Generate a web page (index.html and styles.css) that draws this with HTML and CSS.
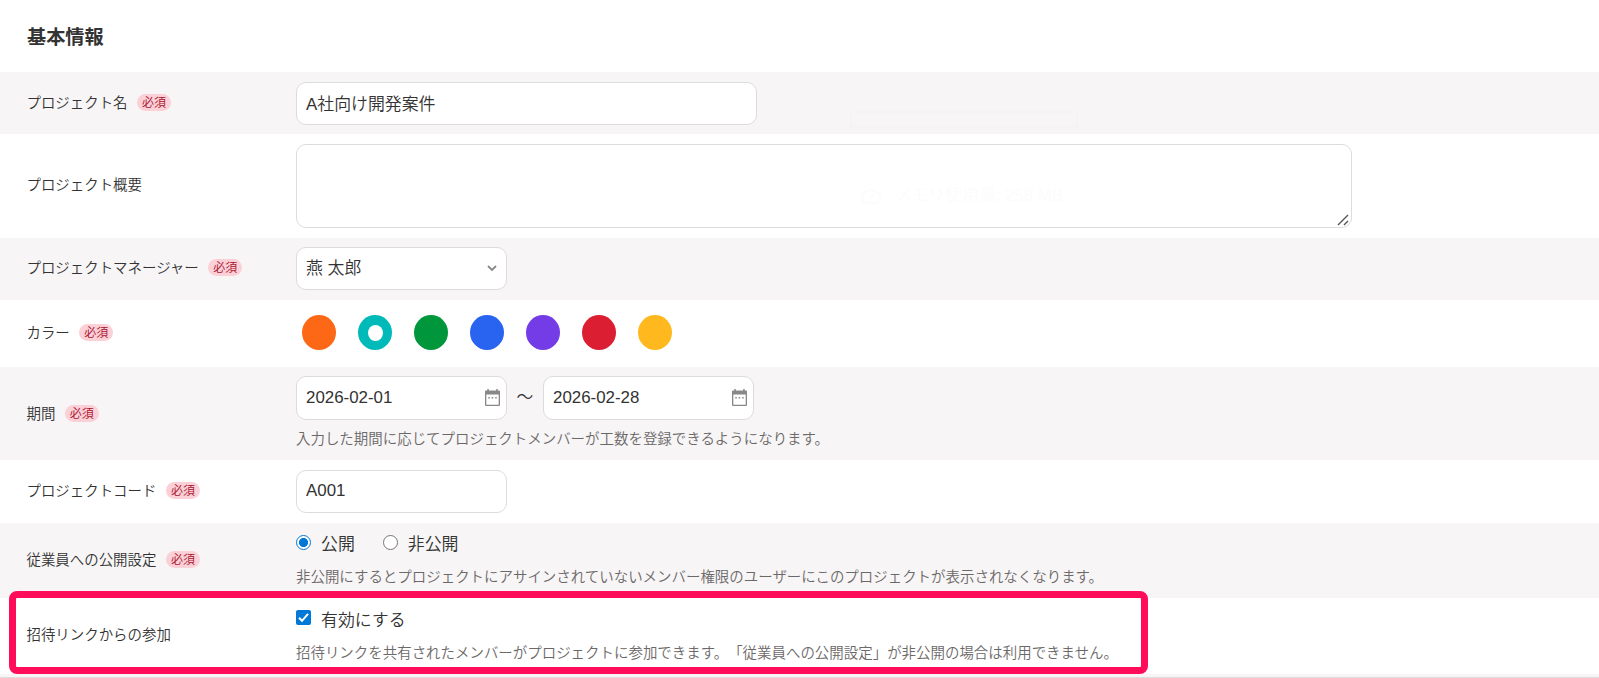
FILE: index.html
```html
<!DOCTYPE html>
<html lang="ja">
<head>
    <meta charset="UTF-8">
    <meta name="viewport" content="width=device-width, initial-scale=1.0">
    <title>基本情報</title>
    <link rel="stylesheet" href="styles.css">
</head>
<body>

    <form class="project-form">
        <h2>基本情報</h2>

        <div class="row row-name">
            <div class="label">プロジェクト名<span class="badge">必須</span></div>
            <div class="field">
                <input type="text" class="control wide" value="A社向け開発案件">
            </div>
        </div>

        <div class="row row-text">
            <div class="label">プロジェクト概要</div>
            <div class="field">
                <div class="textarea-wrap">
                    <textarea class="control"></textarea>
                    <svg class="grip" width="12" height="12" viewBox="0 0 12 12"><path d="M1 11L11 1M7 11L11 7"/></svg>
                </div>
            </div>
        </div>

        <div class="row row-select">
            <div class="label">プロジェクトマネージャー<span class="badge">必須</span></div>
            <div class="field">
                <div class="control box">
                    <span>燕 太郎</span>
                    <svg class="chevron" width="10" height="7" viewBox="0 0 10 7"><path d="M1 1L5 5L9 1"/></svg>
                </div>
            </div>
        </div>

        <div class="row row-color">
            <div class="label">カラー<span class="badge">必須</span></div>
            <div class="field colors">
                <span class="color orange"></span>
                <span class="color teal selected"></span>
                <span class="color green"></span>
                <span class="color blue"></span>
                <span class="color purple"></span>
                <span class="color red"></span>
                <span class="color yellow"></span>
            </div>
        </div>

        <div class="row row-period">
            <div class="label">期間<span class="badge">必須</span></div>
            <div class="field">
                <div class="period">
                    <div class="control box">
                        <span>2026-02-01</span>
                        <svg class="calendar" width="15" height="17" viewBox="0 0 15 17"><path d="M2.3 0h1.5v1.5h7.4V0h1.5v1.5H14a1 1 0 0 1 1 1V16a1 1 0 0 1-1 1H1a1 1 0 0 1-1-1V2.5a1 1 0 0 1 1-1h1.3zM1.3 5.5v10.2h12.4V5.5z" fill-rule="evenodd"/><path d="M3.3 8h1.5v1.5H3.3zM6.7 8h1.5v1.5H6.7zM10.2 8h1.5v1.5h-1.5z"/></svg>
                    </div>
                    <span class="tilde">～</span>
                    <div class="control box">
                        <span>2026-02-28</span>
                        <svg class="calendar" width="15" height="17" viewBox="0 0 15 17"><path d="M2.3 0h1.5v1.5h7.4V0h1.5v1.5H14a1 1 0 0 1 1 1V16a1 1 0 0 1-1 1H1a1 1 0 0 1-1-1V2.5a1 1 0 0 1 1-1h1.3zM1.3 5.5v10.2h12.4V5.5z" fill-rule="evenodd"/><path d="M3.3 8h1.5v1.5H3.3zM6.7 8h1.5v1.5H6.7zM10.2 8h1.5v1.5h-1.5z"/></svg>
                    </div>
                </div>
                <p class="help">入力した期間に応じてプロジェクトメンバーが工数を登録できるようになります。</p>
            </div>
        </div>

        <div class="row row-code">
            <div class="label">プロジェクトコード<span class="badge">必須</span></div>
            <div class="field">
                <input type="text" class="control" value="A001">
            </div>
        </div>

        <div class="row row-public">
            <div class="label">従業員への公開設定<span class="badge">必須</span></div>
            <div class="field">
                <div class="choices">
                    <label class="choice"><input type="radio" name="visibility" checked><span>公開</span></label>
                    <label class="choice"><input type="radio" name="visibility"><span>非公開</span></label>
                </div>
                <p class="help">非公開にするとプロジェクトにアサインされていないメンバー権限のユーザーにこのプロジェクトが表示されなくなります。</p>
            </div>
        </div>

        <div class="row row-invite">
            <div class="label">招待リンクからの参加</div>
            <div class="field">
                <div class="choices">
                    <label class="choice">
                        <svg class="check" width="15" height="15" viewBox="0 0 15 15"><rect width="15" height="15" rx="2"/><path d="M3 7.8L6 10.8L12 3.8"/></svg>
                        <span>有効にする</span>
                    </label>
                </div>
                <p class="help">招待リンクを共有されたメンバーがプロジェクトに参加できます。「従業員への公開設定」が非公開の場合は利用できません。</p>
            </div>
            <div class="highlight"></div>
        </div>

        <!-- faded tab preview -->
        <div class="preview">
            <div class="preview-frame"></div>
            <div class="memory">
                <svg width="20" height="15" viewBox="0 0 20 15"><path d="M3 14a9 8 0 1 1 14 0zM9 10L14 4"/></svg>
                <span>メモリ使用量: 258 MB</span>
            </div>
        </div>
    </form>

</body>
</html>
```

FILE: styles.css
```css
* {
    box-sizing: border-box;
}

body {
    margin: 0;
    height: 678px;
    overflow: hidden;
    background: #f7f5f6;
    color: #333;
    font-family: "Liberation Sans", "Noto Sans CJK JP", sans-serif;
    font-size: 14.4px;
    font-weight: 350;
    text-spacing-trim: space-all;
}

.project-form {
    position: relative;
    height: 678px;
    border-bottom: 1px solid #dedede;
}

h2 {
    margin: 0;
    height: 72px;
    padding: 1px 27px 0;
    line-height: 73px;
    font-size: 19.2px;
    background: #fff;
}

.row {
    display: grid;
    grid-template-columns: 269.5px 1fr;
    height: 62px;
    padding: 10px 0 0 26.5px;
    background: #f7f5f6;
    position: relative;
}

.row:nth-of-type(even) {
    background: #fff;
}

.label {
    display: flex;
    align-items: center;
    height: 39px;
    font-size: 14.45px;
    white-space: nowrap;
}

.badge {
    width: 34px;
    height: 17px;
    margin: 2px 0 0 9.5px;
    border-radius: 9px;
    background: #fbd0d6;
    color: #a8122f;
    font-size: 12px;
    line-height: 18px;
    text-align: center;
}

.control {
    display: block;
    width: 211px;
    height: 43px;
    margin: 0;
    padding: 0 9px 1px;
    border: 1px solid #dcdcdc;
    border-radius: 10px;
    background: #fff;
    color: #333;
    font-family: inherit;
    font-size: 16.9px;
    font-weight: inherit;
    outline: none;
}

.wide {
    width: 461px;
    padding-bottom: 3px;
}

.box {
    display: flex;
    align-items: center;
    justify-content: space-between;
    padding-bottom: 2px;
}

.row-text {
    height: 104px;
}

.row-text .label {
    height: 78px;
}

.textarea-wrap {
    position: relative;
    width: 1056px;
}

textarea.control {
    width: 100%;
    height: 84px;
    resize: none;
}

.grip {
    position: absolute;
    right: 3px;
    bottom: 2px;
    stroke: #555;
    stroke-width: 1.4;
}

.row-select,
.row-period {
    padding-top: 9px;
}

.row-select .box span {
    margin-top: -2px;
}

.chevron {
    margin-top: 2px;
    fill: none;
    stroke: #888;
    stroke-width: 1.8;
}

.row-color {
    height: 67px;
    padding-top: 15px;
}

.row-color .label {
    height: 33px;
}

.colors {
    display: flex;
    gap: 22px;
    padding-left: 6px;
}

.color {
    width: 34px;
    height: 35px;
    border-radius: 50%;
}

.selected {
    display: flex;
    align-items: center;
    justify-content: center;
}

.selected::after {
    content: "";
    width: 15px;
    height: 16px;
    border-radius: 50%;
    background: #fff;
}

.orange { background: #fd6816; }
.teal { background: #00baba; }
.green { background: #00963c; }
.blue { background: #2864f0; }
.purple { background: #733ce6; }
.red { background: #dc1e32; }
.yellow { background: #ffb91e; }

.row-period {
    height: 93px;
}

.row-period .label {
    height: 72px;
}

.row-period .control {
    height: 44px;
    padding: 0 6px 0 9px;
}

.period {
    display: flex;
    align-items: center;
}

.tilde {
    width: 36px;
    font-size: 16.8px;
    line-height: 1;
    text-align: center;
}

.calendar {
    margin-top: -1px;
    fill: #888;
}

.help {
    margin: 0;
    color: #6b6868;
    font-size: 14.46px;
    line-height: 22px;
    white-space: nowrap;
}

.row-period .help {
    margin-top: 8px;
}

.row-code {
    height: 63px;
}

.row-public {
    height: 75px;
    padding-top: 8px;
}

.row-public .label {
    height: 55px;
}

.choices {
    display: flex;
    gap: 28px;
    height: 24px;
}

.choice {
    display: flex;
    gap: 10px;
    font-size: 16.9px;
    line-height: 27px;
}

.choice input {
    appearance: none;
    width: 15px;
    height: 15px;
    margin: 4px 0 0;
    border: 1.5px solid #767676;
    border-radius: 50%;
    background: #fff;
}

.choice input:checked {
    border-color: #0078d7;
    background: radial-gradient(circle, #0078d7 4.2px, #fff 4.9px);
}

.row-public .help {
    margin-top: 11px;
}

.row-invite {
    height: 76px;
    padding-top: 9px;
}

.row-invite .label {
    height: 53px;
}

.row-invite .help {
    margin-top: 11px;
}

.check {
    margin-top: 3px;
    fill: #0078d7;
}

.check path {
    fill: none;
    stroke: #fff;
    stroke-width: 2;
}

.highlight {
    position: absolute;
    left: 9px;
    top: -7px;
    width: 1139px;
    height: 83px;
    border: 7px solid #ff0d5b;
    border-radius: 8px;
}

.preview {
    position: absolute;
    left: 850px;
    top: 111px;
    width: 228px;
    pointer-events: none;
}

.preview-frame {
    height: 17px;
    border: 2px solid #f5f3f4;
}

.memory {
    display: flex;
    align-items: center;
    gap: 14px;
    margin: 56px 0 0 11px;
    color: #fcfcfc;
    font-size: 16.8px;
    line-height: 24px;
    white-space: nowrap;
}

.memory svg {
    fill: none;
    stroke: #fcfcfc;
    stroke-width: 2;
}
```
